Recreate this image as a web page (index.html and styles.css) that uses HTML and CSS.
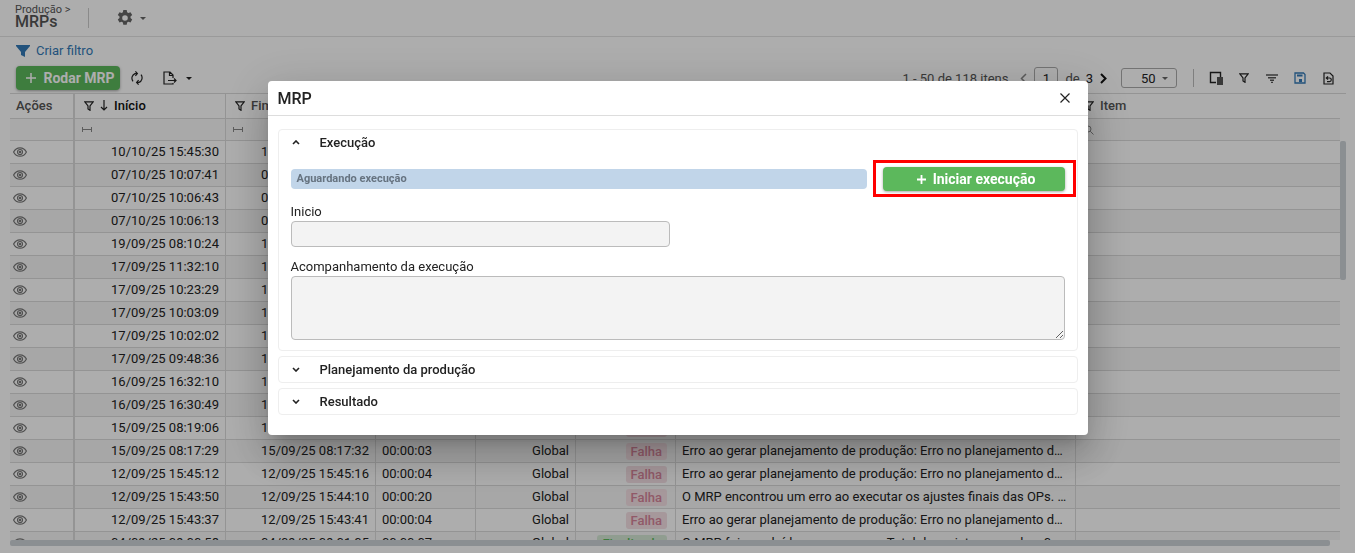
FILE: index.html
```html
<!DOCTYPE html>
<html lang="pt-BR">
<head>
  <meta charset="UTF-8">
  <meta name="viewport" content="width=device-width, initial-scale=1.0">
  <title>MRPs</title>
  <link rel="stylesheet" href="styles.css">
</head>
<body>
  <svg class="sprite" aria-hidden="true">
    <symbol id="eye" viewBox="0 0 14 10">
      <path d="M.6 5C2 2.200 4.300.8 7 .8S12 2.200 13.400 5C12 7.800 9.700 9.200 7 9.200S2 7.800.6 5z"/>
      <circle cx="7" cy="5" r="2.500"/><circle cx="7" cy="5" r=".7"/>
    </symbol>
    <symbol id="funnel" viewBox="0 0 10 10"><path d="M.8.8h8.400L6 5v4.300L4 8V5z"/></symbol>
    <symbol id="range" viewBox="0 0 10 5"><path d="M.5 0v5M9.500 0v5M.5 2.500h9"/></symbol>
    <symbol id="plus" viewBox="0 0 10 10"><path d="M5 0v10M0 5h10"/></symbol>
    <symbol id="chevron" viewBox="0 0 8 5"><path d="M1 1l3 3 3-3"/></symbol>
    <symbol id="search" viewBox="0 0 10 10"><circle cx="4" cy="4" r="3"/><path d="M6.200 6.200l3.300 3.300"/></symbol>
  </svg>

  <div class="app">
    <header class="topbar">
      <div class="title">
        <a href="#">Produção &gt;</a>
        <h1>MRPs</h1>
      </div>
      <button type="button" class="icon-btn gear" aria-label="Configurações">
        <svg width="16" height="16" viewBox="0 0 16 16"><path fill="#666" fill-rule="evenodd" d="M6.300 0h3.400l.4 2.200 1.300.8 2.100-.8 1.700 2.900-1.700 1.400v1.600l1.700 1.400-1.700 3-2.100-.8-1.300.8-.4 2.200H6.300l-.4-2.200-1.300-.8-2.100.8-1.700-3 1.700-1.400V6.500L.8 5.100l1.700-2.900 2.100.8 1.300-.8zM8 5.200a2.800 2.800 0 1 0 0 5.600 2.800 2.800 0 0 0 0-5.600z"/></svg>
        <i class="caret muted"></i>
      </button>
    </header>

    <a class="create-filter" href="#">
      <svg width="14" height="12" viewBox="0 0 14 12"><path fill="#337ab7" d="M0 0h14v1L9 7v5L5 10V7L0 1z"/></svg>
      Criar filtro
    </a>

    <div class="toolbar">
      <button type="button" class="btn-green run"><svg class="line thin" width="10" height="10"><use href="#plus"/></svg>Rodar MRP</button>
      <button type="button" class="icon-btn" aria-label="Atualizar">
        <svg class="line dark" width="14" height="14" viewBox="0 0 14 14"><path d="M3 10.300A5 5 0 0 1 5 2.600h2M5.400.4l2 2.200-2 2.200M11 3.700a5 5 0 0 1-2 7.700H7M8.600 13.600l-2-2.200 2-2.200"/></svg>
      </button>
      <button type="button" class="icon-btn export" aria-label="Exportar">
        <svg class="line dark" width="14" height="14" viewBox="0 0 14 14"><path d="M10 7V4L7 1H1v12h9v-1M6.500 1v3.500H10M5 9.500h8M11 7.500l2 2-2 2"/></svg>
        <i class="caret"></i>
      </button>

      <div class="pager">
        <span class="count">1 - 50 de 118 itens</span>
        <button type="button" class="icon-btn page-prev" aria-label="Página anterior"><svg width="7" height="11" viewBox="0 0 7 11"><path d="M6 1L1.500 5.500 6 10"/></svg></button>
        <input class="page-input" type="text" value="1" aria-label="Página">
        <span class="of">de</span>
        <span class="last">3</span>
        <button type="button" class="icon-btn page-next" aria-label="Próxima página"><svg width="7" height="11" viewBox="0 0 7 11"><path d="M1 1l4.500 4.500L1 10"/></svg></button>
        <div class="size">
          <select aria-label="Itens por página"><option>50</option></select>
          <i class="caret muted"></i>
        </div>
      </div>
      <div class="actions">
        <button type="button" class="icon-btn" aria-label="Colunas"><svg width="14" height="14" viewBox="0 0 14 14"><path d="M7 11.500H1.500v-10h10V6" fill="none" stroke="#222" stroke-width="1.400"/><path d="M8 6h6v8H8z" fill="#555"/></svg></button>
        <button type="button" class="icon-btn" aria-label="Filtrar"><svg class="line dark" width="10" height="10"><use href="#funnel"/></svg></button>
        <button type="button" class="icon-btn" aria-label="Ordenar"><svg width="12" height="9" viewBox="0 0 12 9"><path d="M0 1h12M2 3.700h8M4 6.300h4M5 8.500h2" fill="none" stroke="#555" stroke-width="1.500"/></svg></button>
        <button type="button" class="icon-btn" aria-label="Salvar"><svg width="12" height="12" viewBox="0 0 12 12"><path d="M1 1h8.500L11 2.500V11H1z" fill="none" stroke="#337ab7" stroke-width="1.300"/><path d="M3 2.500h5.500v2H3zM5 7h3v3H5z" fill="#337ab7"/></svg></button>
        <button type="button" class="icon-btn" aria-label="Restaurar"><svg class="line dark" width="11" height="13" viewBox="0 0 11 13"><path d="M1 1h6l3 3v8H1zM3.500 6h3a1.800 1.800 0 0 1 0 3.600H4M5 4.400L3.300 6 5 7.600"/></svg></button>
      </div>
    </div>

    <div class="grid">
      <div class="grid-view">
      <table>
        <colgroup><col class="c-act"><col class="c-start"><col class="c-end"><col class="c-time"><col class="c-type"><col class="c-status"><col class="c-msg"><col></colgroup>
        <thead>
          <tr class="heads">
            <th>Ações</th>
            <th class="sorted"><svg class="line dark" width="10" height="10"><use href="#funnel"/></svg><svg class="line dark" width="8" height="11" viewBox="0 0 8 11"><path d="M4 0v10M1 7l3 3 3-3"/></svg>Início</th>
            <th><svg class="line dark" width="10" height="10"><use href="#funnel"/></svg>Fim</th>
            <th>Duração</th>
            <th>Tipo</th>
            <th>Status</th>
            <th>Mensagem</th>
            <th class="item"><svg class="line dark" width="10" height="10"><use href="#funnel"/></svg>Item</th>
          </tr>
          <tr class="filters">
            <td></td>
            <td><svg class="line gray" width="10" height="5"><use href="#range"/></svg></td>
            <td><svg class="line gray" width="10" height="5"><use href="#range"/></svg></td>
            <td></td><td></td><td></td><td></td>
            <td><svg class="line gray" width="10" height="10"><use href="#search"/></svg></td>
          </tr>
        </thead>
        <tbody>
          <tr><td><a href="#" aria-label="Ver"><svg><use href="#eye"/></svg></a></td><td>10/10/25 15:45:30</td><td>10/10/25 15:45:34</td><td></td><td></td><td></td><td></td><td></td></tr>
          <tr><td><a href="#" aria-label="Ver"><svg><use href="#eye"/></svg></a></td><td>07/10/25 10:07:41</td><td>07/10/25 10:07:45</td><td></td><td></td><td></td><td></td><td></td></tr>
          <tr><td><a href="#" aria-label="Ver"><svg><use href="#eye"/></svg></a></td><td>07/10/25 10:06:43</td><td>07/10/25 10:06:47</td><td></td><td></td><td></td><td></td><td></td></tr>
          <tr><td><a href="#" aria-label="Ver"><svg><use href="#eye"/></svg></a></td><td>07/10/25 10:06:13</td><td>07/10/25 10:06:17</td><td></td><td></td><td></td><td></td><td></td></tr>
          <tr><td><a href="#" aria-label="Ver"><svg><use href="#eye"/></svg></a></td><td>19/09/25 08:10:24</td><td>19/09/25 08:10:28</td><td></td><td></td><td></td><td></td><td></td></tr>
          <tr><td><a href="#" aria-label="Ver"><svg><use href="#eye"/></svg></a></td><td>17/09/25 11:32:10</td><td>17/09/25 11:32:14</td><td></td><td></td><td></td><td></td><td></td></tr>
          <tr><td><a href="#" aria-label="Ver"><svg><use href="#eye"/></svg></a></td><td>17/09/25 10:23:29</td><td>17/09/25 10:23:33</td><td></td><td></td><td></td><td></td><td></td></tr>
          <tr><td><a href="#" aria-label="Ver"><svg><use href="#eye"/></svg></a></td><td>17/09/25 10:03:09</td><td>17/09/25 10:03:13</td><td></td><td></td><td></td><td></td><td></td></tr>
          <tr><td><a href="#" aria-label="Ver"><svg><use href="#eye"/></svg></a></td><td>17/09/25 10:02:02</td><td>17/09/25 10:02:06</td><td></td><td></td><td></td><td></td><td></td></tr>
          <tr><td><a href="#" aria-label="Ver"><svg><use href="#eye"/></svg></a></td><td>17/09/25 09:48:36</td><td>17/09/25 09:48:40</td><td></td><td></td><td></td><td></td><td></td></tr>
          <tr><td><a href="#" aria-label="Ver"><svg><use href="#eye"/></svg></a></td><td>16/09/25 16:32:10</td><td>16/09/25 16:32:14</td><td></td><td></td><td></td><td></td><td></td></tr>
          <tr><td><a href="#" aria-label="Ver"><svg><use href="#eye"/></svg></a></td><td>16/09/25 16:30:49</td><td>16/09/25 16:30:53</td><td></td><td></td><td></td><td></td><td></td></tr>
          <tr><td><a href="#" aria-label="Ver"><svg><use href="#eye"/></svg></a></td><td>15/09/25 08:19:06</td><td>15/09/25 08:19:10</td><td></td><td></td><td><span class="badge fail">Falha</span></td><td></td><td></td></tr>
          <tr><td><a href="#" aria-label="Ver"><svg><use href="#eye"/></svg></a></td><td>15/09/25 08:17:29</td><td>15/09/25 08:17:32</td><td>00:00:03</td><td>Global</td><td><span class="badge fail">Falha</span></td><td>Erro ao gerar planejamento de produção: Erro no planejamento da produção</td><td></td></tr>
          <tr><td><a href="#" aria-label="Ver"><svg><use href="#eye"/></svg></a></td><td>12/09/25 15:45:12</td><td>12/09/25 15:45:16</td><td>00:00:04</td><td>Global</td><td><span class="badge fail">Falha</span></td><td>Erro ao gerar planejamento de produção: Erro no planejamento da produção</td><td></td></tr>
          <tr><td><a href="#" aria-label="Ver"><svg><use href="#eye"/></svg></a></td><td>12/09/25 15:43:50</td><td>12/09/25 15:44:10</td><td>00:00:20</td><td>Global</td><td><span class="badge fail">Falha</span></td><td>O MRP encontrou um erro ao executar os ajustes finais das OPs. Verifique</td><td></td></tr>
          <tr><td><a href="#" aria-label="Ver"><svg><use href="#eye"/></svg></a></td><td>12/09/25 15:43:37</td><td>12/09/25 15:43:41</td><td>00:00:04</td><td>Global</td><td><span class="badge fail">Falha</span></td><td>Erro ao gerar planejamento de produção: Erro no planejamento da produção</td><td></td></tr>
          <tr><td><a href="#" aria-label="Ver"><svg><use href="#eye"/></svg></a></td><td>04/09/25 09:00:58</td><td>04/09/25 09:01:05</td><td>00:00:07</td><td>Global</td><td><span class="badge done">Finalizado</span></td><td>O MRP foi concluído com sucesso. Total de registros gerados: 0</td><td></td></tr>
        </tbody>
      </table>
      </div>
      <div class="scroll-y"></div>
      <div class="scroll-x"></div>
    </div>
  </div>

  <div class="overlay">
    <div class="modal" role="dialog" aria-labelledby="modalTitle">
      <div class="modal-header">
        <h2 id="modalTitle">MRP</h2>
        <button type="button" class="icon-btn" aria-label="Fechar"><svg class="line dark" width="10" height="10" viewBox="0 0 10 10"><path d="M.5.5l9 9M9.500.5l-9 9"/></svg></button>
      </div>
      <div class="modal-body">
        <section class="panel">
          <button type="button" class="panel-head open"><svg width="8" height="5"><use href="#chevron"/></svg>Execução</button>
          <div class="panel-content">
            <div class="run-row">
              <div class="status">Aguardando execução</div>
              <div class="highlight">
                <button type="button" class="btn-green"><svg class="line" width="9" height="9" viewBox="0 0 10 10"><use href="#plus"/></svg>Iniciar execução</button>
              </div>
            </div>
            <label for="inicio">Inicio</label>
            <input id="inicio" type="text" readonly>
            <label for="acompanhamento">Acompanhamento da execução</label>
            <textarea id="acompanhamento" readonly></textarea>
          </div>
        </section>
        <section class="panel">
          <button type="button" class="panel-head"><svg width="8" height="5"><use href="#chevron"/></svg>Planejamento da produção</button>
        </section>
        <section class="panel">
          <button type="button" class="panel-head"><svg width="8" height="5"><use href="#chevron"/></svg>Resultado</button>
        </section>
      </div>
    </div>
  </div>
</body>
</html>
```

FILE: styles.css
```css
* {
  box-sizing: border-box;
}
body {
  margin: 0;
  font-family: Roboto, sans-serif;
  font-size: 13px;
  color: #222;
  background: #fff;
}
button, input, select, textarea {
  font-family: inherit;
  font-size: inherit;
  color: inherit;
}
a {
  color: inherit;
  text-decoration: none;
}
.sprite {
  position: absolute;
  width: 0;
  height: 0;
}
.line {
  fill: none;
  stroke: #fff;
  stroke-width: 2;
}
.line.thin {
  stroke-width: 1.5;
}
.line.dark {
  stroke: #222;
  stroke-width: 1.2;
}
.line.gray {
  stroke: #888;
  stroke-width: 1;
}
.icon-btn {
  display: flex;
  align-items: center;
  justify-content: center;
  padding: 0;
  border: none;
  background: none;
  cursor: pointer;
}
.caret {
  border: 3px solid transparent;
  border-top-color: #222;
  border-bottom: none;
}
.caret.muted {
  border-top-color: #666;
}

/* page */
.app {
  display: flex;
  flex-direction: column;
  height: 100vh;
  overflow: hidden;
}
.topbar {
  display: flex;
  align-items: center;
  height: 37px;
  flex: none;
  padding-left: 15px;
  border-bottom: 1px solid #e4e4e4;
}
.title {
  display: flex;
  flex-direction: column;
  width: 74px;
  height: 20px;
  justify-content: center;
  padding-bottom: 2px;
  border-right: 1px solid #ccc;
  color: #555;
  font-size: 11px;
  line-height: 10px;
}
.title h1 {
  margin: 0;
  font-size: 16px;
  line-height: 14px;
  font-weight: 500;
}
.gear {
  margin-left: 28px;
  gap: 7px;
}
.create-filter {
  display: flex;
  align-items: center;
  align-self: flex-start;
  gap: 6px;
  height: 27px;
  flex: none;
  margin-left: 16px;
  color: #337ab7;
}
.toolbar {
  display: flex;
  align-items: center;
  height: 28px;
  flex: none;
  margin-bottom: 1px;
  padding: 0 19px 0 16px;
  gap: 10px;
}
.btn-green {
  display: flex;
  align-items: center;
  justify-content: center;
  gap: 7px;
  height: 24px;
  padding: 0 0 0 5px;
  border: none;
  border-radius: 4px;
  background: #5cb85c;
  box-shadow: 0 1px 3px rgba(0, 0, 0, 0.35);
  color: #fff;
  font-size: 14px;
  font-weight: 700;
  cursor: pointer;
}
.run {
  width: 104px;
}
.export {
  margin-left: 9px;
  gap: 9px;
}
.pager {
  display: flex;
  align-items: center;
  margin-left: auto;
}
.count, .of {
  color: #555;
}
.page-prev {
  margin: 0 7px 0 12px;
}
.page-prev path, .page-next path {
  fill: none;
  stroke: #888;
  stroke-width: 1.5;
}
.page-next path {
  stroke: #111;
  stroke-width: 2;
}
.page-input {
  width: 24px;
  height: 22px;
  padding: 0;
  border: 1px solid #aaa;
  border-radius: 3px;
  background: none;
  text-align: center;
}
.of {
  margin: 0 6px 0 7px;
}
.page-next {
  margin: 0 14px 0 7px;
}
.size {
  display: flex;
  align-items: center;
  position: relative;
}
.size select {
  appearance: none;
  width: 56px;
  height: 20px;
  padding: 0 0 0 19px;
  border: 1px solid #aaa;
  border-radius: 3px;
  background: none;
}
.size .caret {
  position: absolute;
  right: 9px;
}
.actions {
  display: flex;
  align-items: center;
  height: 18px;
  margin-left: 6px;
  padding-left: 8px;
  border-left: 1px solid #bbb;
  margin-right: -6px;
}
.actions .icon-btn {
  width: 28px;
}

/* grid */
.grid {
  position: relative;
  flex: 1;
  min-height: 0;
  margin: 0 9px 7px 10px;
  padding-bottom: 6px;
  border-top: 1px solid #dadada;
}
.grid-view {
  height: 100%;
  margin-right: 6px;
  overflow: hidden;
}
table {
  width: 100%;
  table-layout: fixed;
  border-collapse: separate;
  border-spacing: 0;
}
.c-act { width: 65px; }
.c-start { width: 151px; }
.c-end { width: 150px; }
.c-time, .c-type, .c-status { width: 100px; }
.c-msg { width: 400px; }
th, td {
  height: 23px;
  padding: 0 6px;
  border-right: 1px solid #dadada;
  border-bottom: 1px solid #dadada;
  line-height: 16px;
  text-align: left;
  white-space: nowrap;
  overflow: hidden;
  text-overflow: ellipsis;
}
th:last-child, td:last-child {
  border-right: none;
}
th:first-child, td:first-child {
  border-right-width: 2px;
}
th {
  height: 25px;
  color: #555;
  font-weight: 500;
}
th svg {
  margin: 0 6px 0 3px;
  vertical-align: -1px;
}
th svg + svg {
  margin-left: 0;
}
.sorted {
  color: #111;
}
.item {
  padding-left: 5px;
}
.filters td {
  height: 22px;
  padding-left: 7px;
  background: #fafafa;
}
.filters svg {
  display: block;
}
.filters td:last-child {
  padding-left: 8px;
}
tbody tr:nth-child(even) {
  background: #f6f6f6;
}
tbody td:nth-child(1) {
  padding: 0 3px;
}
tbody td:nth-child(2),
tbody td:nth-child(3),
tbody td:nth-child(5) {
  text-align: right;
}
tbody td:nth-child(6) {
  padding-right: 8px;
  text-align: right;
}
tbody svg {
  display: block;
  width: 14px;
  height: 10px;
  fill: none;
  stroke: #777;
  stroke-width: 1.2;
}
.badge {
  display: inline-block;
  padding: 0 5px;
  border-radius: 3px;
  line-height: 17px;
  font-weight: 500;
  vertical-align: top;
}
.fail {
  background: #f5e0e5;
  color: #d6849a;
}
.done {
  background: #d5e8d5;
  color: #5cb85c;
}
.scroll-y, .scroll-x {
  position: absolute;
  border-radius: 2px;
  background: #cdd3d7;
}
.scroll-y {
  top: 47px;
  right: 0;
  width: 6px;
  height: 139px;
}
.scroll-x {
  left: 0;
  right: 16px;
  bottom: 0;
  height: 6px;
}

/* modal */
.overlay {
  position: fixed;
  inset: 0;
  display: flex;
  justify-content: center;
  align-items: flex-start;
  padding-top: 81px;
  background: rgba(0, 0, 0, 0.32);
}
.modal {
  width: 820px;
  max-width: 90%;
  border-radius: 4px;
  background: #fff;
  box-shadow: 0 11px 15px -7px rgba(0, 0, 0, 0.2), 0 24px 38px 3px rgba(0, 0, 0, 0.14), 0 9px 46px 8px rgba(0, 0, 0, 0.12);
}
.modal-header {
  display: flex;
  align-items: center;
  justify-content: space-between;
  height: 35px;
  padding: 0 18px 0 10px;
  border-bottom: 1px solid #ddd;
}
.modal-header h2 {
  margin: 0;
  font-size: 16px;
  font-weight: 500;
}
.modal-body {
  display: flex;
  flex-direction: column;
  gap: 5px;
  padding: 13px 10px 20px;
}
.panel {
  border: 1px solid #eee;
  border-radius: 4px;
}
.panel-head {
  display: flex;
  align-items: center;
  gap: 20px;
  width: 100%;
  height: 25px;
  padding: 0 13px;
  border: none;
  background: none;
  font-weight: 500;
  cursor: pointer;
}
.panel-head svg {
  fill: none;
  stroke: #222;
  stroke-width: 1.6;
}
.panel-head.open svg {
  transform: rotate(180deg);
}
.panel-content {
  padding: 12px 12px 10px;
}
.run-row {
  display: flex;
  align-items: center;
  gap: 16px;
  margin-bottom: 12px;
}
.status {
  flex: 1;
  padding: 0 6px;
  border-radius: 4px;
  background: #c1d5e9;
  color: #667380;
  font-size: 11px;
  line-height: 20px;
  font-weight: 700;
}
.highlight {
  position: relative;
}
.highlight::after {
  content: "";
  position: absolute;
  inset: -7px -11px -6px -10px;
  border: 3px solid #f00;
  pointer-events: none;
}
.highlight .btn-green {
  width: 182px;
}
label {
  display: block;
  line-height: 18px;
}
.panel-content input,
.panel-content textarea {
  display: block;
  border: 1px solid #bbb;
  border-radius: 4px;
  background: #f3f3f3;
}
.panel-content input {
  width: 379px;
  max-width: 100%;
  height: 26px;
  margin-bottom: 11px;
}
.panel-content textarea {
  width: 100%;
  height: 64px;
}
```
